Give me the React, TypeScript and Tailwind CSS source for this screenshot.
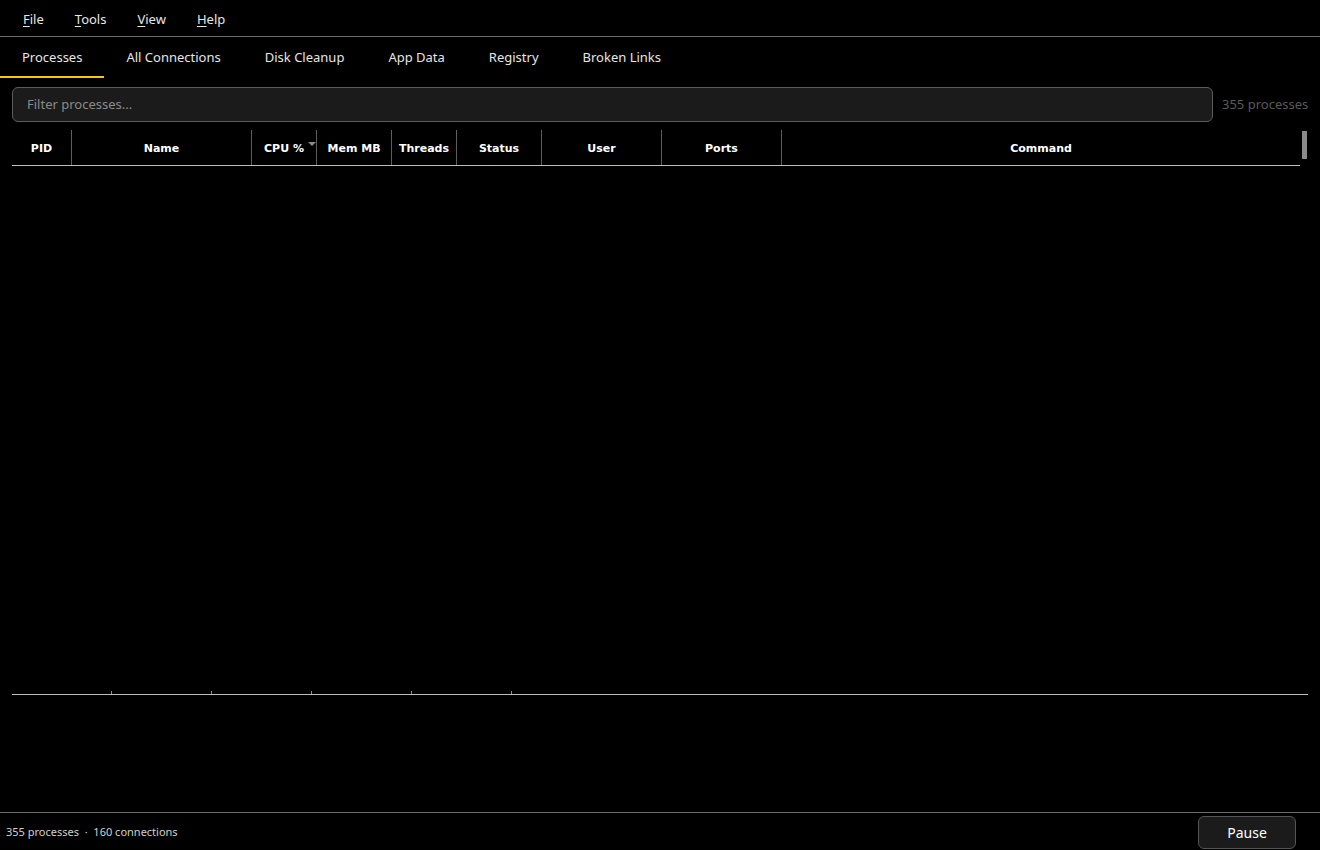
import React from "react";

const menus = [
  { key: "F", rest: "ile" },
  { key: "T", rest: "ools" },
  { key: "V", rest: "iew" },
  { key: "H", rest: "elp" },
];

const tabs = ["Processes", "All Connections", "Disk Cleanup", "App Data", "Registry", "Broken Links"];

const columns = [
  { label: "PID", w: "w-[60px]" },
  { label: "Name", w: "w-[180px]" },
  { label: "CPU %", w: "w-[65px]", sorted: true },
  { label: "Mem MB", w: "w-[75px]" },
  { label: "Threads", w: "w-[65px]" },
  { label: "Status", w: "w-[85px]" },
  { label: "User", w: "w-[120px]" },
  { label: "Ports", w: "w-[120px]" },
  { label: "Command", w: "flex-1" },
];

export default function App() {
  return (
    <div className="flex h-[850px] w-[1320px] flex-col overflow-hidden bg-black text-[#e6e6e6]" style={{ fontFamily: "'Noto Sans', 'Open Sans', sans-serif" }}>
      {/* menu bar */}
      <div className="flex h-[37px] items-center gap-[31px] border-b border-[#6a6a6a] pl-[23px] pt-[3px] text-[13px]">
        {menus.map((m) => (
          <span key={m.key}>
            <span className="underline underline-offset-2">{m.key}</span>
            {m.rest}
          </span>
        ))}
      </div>

      {/* tabs */}
      <div className="flex h-[41px] text-[13px]">
        {tabs.map((t, i) => (
          <div
            key={t}
            className={
              i === 0
                ? "flex items-center border-b-2 border-[#f5c518] px-[22px] pt-[3px]"
                : "flex items-center border-b-2 border-transparent px-[22px] pt-[3px]"
            }
          >
            {t}
          </div>
        ))}
      </div>

      {/* filter row */}
      <div className="mt-[9px] flex items-center gap-[9px] pl-[12px]">
        <div className="flex h-[35px] w-[1201px] items-center rounded-[6px] border border-[#5c5c5c] bg-[#1b1b1b] px-[14px] text-[13px] text-[#8a8a8a]">
          Filter processes...
        </div>
        <span className="text-[13px] text-[#5a5a5a]">355 processes</span>
      </div>

      {/* table */}
      <div className="mt-[8px] flex h-[561px] px-[12px]">
        <div className="flex flex-1 flex-col">
          <div className="flex h-[36px] border-b border-[#bdbdbd] text-[11px] font-bold text-white" style={{ fontFamily: "'DejaVu Sans', Verdana, sans-serif" }}>
            {columns.map((c, i) => (
              <div
                key={c.label}
                className={`${c.w} relative flex items-center justify-center pt-[3px] ${i < columns.length - 1 ? "border-r border-[#5e5e5e]" : ""}`}
              >
                {c.label}
                {c.sorted && (
                  <span className="absolute right-0 top-[12px] h-0 w-0 border-x-[4px] border-t-[4px] border-x-transparent border-t-[#8c8c8c]" />
                )}
              </div>
            ))}
          </div>
          <div className="flex-1" />
        </div>
        <div className="ml-[2px] w-[6px] pt-[1px]">
          <div className="h-[28px] w-[5px] bg-[#8a8a8a]" />
        </div>
      </div>

      {/* bottom ruler */}
      <div className="mx-[12px] flex h-[4px] items-end border-b border-[#bdbdbd]">
        {[0, 1, 2, 3, 4].map((i) => (
          <div key={i} className="h-[3px] w-[100px] border-r border-[#8a8a8a]" />
        ))}
      </div>

      <div className="flex-1" />

      {/* status bar */}
      <div className="flex h-[38px] items-center justify-between border-t border-[#6a6a6a] pl-[6px] pr-[24px]">
        <span className="whitespace-pre pt-[1px] text-[11px] text-[#d0d0d0]">355 processes  ·  160 connections</span>
        <button className="mt-[1px] h-[33px] w-[98px] rounded-[6px] border border-[#555] bg-[#1b1b1b] text-[14px] text-white">
          Pause
        </button>
      </div>
    </div>
  );
}
